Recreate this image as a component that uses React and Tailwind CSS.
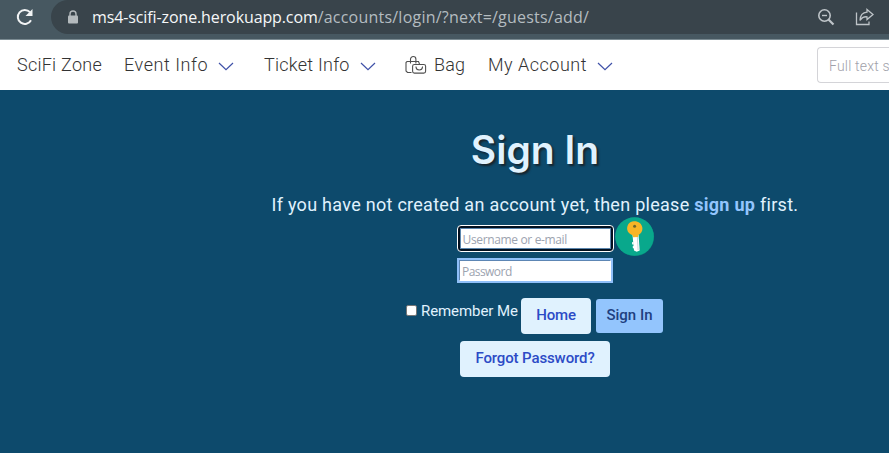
const Chevron = () => (
  <svg width="16" height="9" viewBox="0 0 16 9" fill="none" stroke="#3f51a8" strokeWidth="1.200" className="mt-[3px] shrink-0">
    <path d="M1 1l7 6.700L15 1" />
  </svg>
);

const BagIcon = () => (
  <svg width="22" height="20" viewBox="0 0 22 20" fill="none" stroke="#505050" strokeWidth="1.100" className="shrink-0">
    <path d="M6.500 17.500H2.500L1 16V7.500L2 6.500h11.500L14.500 9M5.500 8.500V4.200a2.700 2.700 0 0 1 5.400 0v4.300" />
    <rect x="7.600" y="9.500" width="13" height="8.600" rx="1.800" fill="#fff" />
    <path d="M11 12c.3 4 6.200 4 6.500 0M10.500 12h1M17 12h1" />
  </svg>
);

const KeyBadge = () => (
  <svg width="40" height="41" viewBox="0 0 40 41" className="absolute left-[157px] -top-[10px]">
    <circle cx="19.800" cy="20.800" r="19.300" fill="#087c75" />
    <circle cx="19.500" cy="20.500" r="19.300" fill="#09a88c" />
    <path d="M17.500 19l6-.5 1.200 16-3 1.200-2.700-1.200z" fill="#fff" />
    <path d="M22.300 20l.8 14" stroke="#c7d7dc" strokeWidth="1" />
    <path d="M18.500 26l-1.500.2.200 2.200 1.500-.1M19 30l-1.300.2.200 2 1.500 0" fill="#fff" />
    <path d="M12.200 13.500c-.5-4.500 2.300-8 6.500-8.300 4.500-.3 8.300 2.400 8.700 6.800.3 3-1.500 5.800-4 6.900l-.3 2-5 .3-.5-2c-2.800-1-5-3-5.400-5.700z" fill="#f8b526" />
    <circle cx="19.600" cy="10.200" r="1.500" fill="#6d672c" />
  </svg>
);

export default function App() {
  return (
    <div className="h-[453px] w-[889px] overflow-hidden bg-[#0d4a6c] font-['Roboto','Liberation_Sans',sans-serif]">
      <header className="flex h-10 border-b border-[#7b8b92] bg-[#475861]">
        <svg width="20" height="20" viewBox="0 0 20 20" className="ml-[15px] mt-[7px] shrink-0">
          <path d="M16 13.200A7 7 0 1 1 15 5.200" fill="none" stroke="#f1f3f4" strokeWidth="2" />
          <path d="M17.500 2v7h-7z" fill="#f1f3f4" />
        </svg>
        <div className="ml-4 flex h-[34px] flex-1 items-center rounded-l-full bg-[#39444b]">
          <svg width="12" height="15" viewBox="0 0 12 15" className="ml-4 shrink-0">
            <path d="M3 6V4a3 3 0 0 1 6 0v2" fill="none" stroke="#b4babd" strokeWidth="1.400" />
            <rect x="1" y="5.500" width="10" height="8" rx="1" fill="#b4babd" />
          </svg>
          <div className="ml-[13px] w-[498px] whitespace-nowrap font-['Open_Sans','Noto_Sans',sans-serif] text-[16px] leading-6 text-[#b4bcc0]">
            <span className="tracking-[-0.110px] text-[#f5f7f8]">ms4-scifi-zone.herokuapp.com</span>
            <span className="tracking-[0.220px]">/accounts/login/?next=/guests/add/</span>
          </div>
          <svg width="18" height="18" viewBox="0 0 18 18" fill="none" stroke="#bec4c8" className="ml-auto mr-[20px] shrink-0">
            <circle cx="7.500" cy="7.500" r="5.700" strokeWidth="1.600" />
            <path d="M5 7.500h5" strokeWidth="1.400" />
            <path d="M11.500 11.500l5 5" strokeWidth="2.200" />
          </svg>
          <svg width="19" height="18" viewBox="0 0 19 18" fill="none" stroke="#bec4c8" strokeWidth="1.300" className="mr-[15px] shrink-0">
            <path d="M1.500 4.500v12H14v-3" />
            <path d="M12 1.500l6 5-6 5V8.800C9 8.500 6.500 10 5 12.500c.2-4.500 2.500-8 7-8.300z" />
          </svg>
        </div>
      </header>

      <nav className="flex h-[50px] items-center bg-white pl-[17px] text-[18px] font-light text-[#333333]">
        <a className="mb-px w-[107px] whitespace-nowrap tracking-[0.250px]">SciFi Zone</a>
        <div className="mb-px flex w-[140px] items-center">
          <a className="w-[94px] whitespace-nowrap tracking-[0.550px]">Event Info</a>
          <Chevron />
        </div>
        <div className="mb-px flex w-[141px] items-center">
          <a className="w-[96px] whitespace-nowrap tracking-[0.250px]">Ticket Info</a>
          <Chevron />
        </div>
        <div className="mb-px flex w-[83px] items-center">
          <BagIcon />
          <a className="ml-[7px] tracking-[0.200px]">Bag</a>
        </div>
        <div className="mb-px flex items-center">
          <a className="w-[109px] whitespace-nowrap tracking-[0.500px]">My Account</a>
          <Chevron />
        </div>
        <div className="ml-auto flex h-9 w-[72px] items-center rounded-l border border-r-0 border-[#d4d4d8] pl-[11px] pt-[2px] text-[14px] whitespace-nowrap text-[#a1a1aa]">
          <span className="tracking-[0.200px]">Full text s</span>
        </div>
      </nav>

      <main className="flex flex-col items-center pl-[181px] text-[#e0f2fe]">
        <h1 className="mt-[36px] whitespace-nowrap font-['Inter',sans-serif] text-[39px] font-semibold leading-12 [text-shadow:2px_2px_2px_#17252e]">Sign In</h1>
        <p className="mt-[17px] w-[527px] whitespace-nowrap text-[18px] leading-7 tracking-[0.280px]">
          If you have not created an account yet, then please <b className="text-[#93c5fd]">sign up</b> first.
        </p>
        <div className="relative mt-[6px] h-[27px] w-[157px] rounded-[4px] border border-white bg-[#03101f] p-[2px]">
          <div className="h-full border border-[#5b86ad] bg-white pl-[2px] font-['Open_Sans','Noto_Sans',sans-serif] text-[12px] leading-[22px] tracking-[-0.350px] text-[#9ca3af]">Username or e-mail</div>
          <KeyBadge />
        </div>
        <div className="mt-[6px] h-[25px] w-[156px] border-2 border-[#8fbff8] bg-white">
          <div className="h-full border border-[#5d86b4] border-r-white border-b-white pl-[2px] font-['Open_Sans','Noto_Sans',sans-serif] text-[12px] leading-[22px] tracking-[-0.550px] text-[#9ca3af]">Password</div>
        </div>
        <div className="mt-[15px] flex h-9 w-[258px] items-center">
          <span className="mb-[11px] size-[11px] shrink-0 rounded-[2px] border border-[#767676] bg-white" />
          <span className="mb-[9px] ml-[4px] w-[100px] whitespace-nowrap text-[15px] tracking-[-0.080px]">Remember Me</span>
          <button className="h-9 w-[70px] shrink-0 rounded-[4px] bg-[#e0f2fe] pb-[2px] text-[15px] font-medium tracking-[-0.150px] text-[#2c4bc6]">Home</button>
          <button className="ml-[5px] h-[34px] w-[67px] shrink-0 rounded-[3px] bg-[#93c5fd] pb-px text-[15px] font-medium text-[#1e4080]">Sign In</button>
        </div>
        <button className="mt-[7px] h-9 w-[150px] rounded-[4px] bg-[#e0f2fe] pb-[2px] text-[15px] font-medium tracking-[-0.120px] text-[#2c4bc6]">Forgot Password?</button>
      </main>
    </div>
  );
}
